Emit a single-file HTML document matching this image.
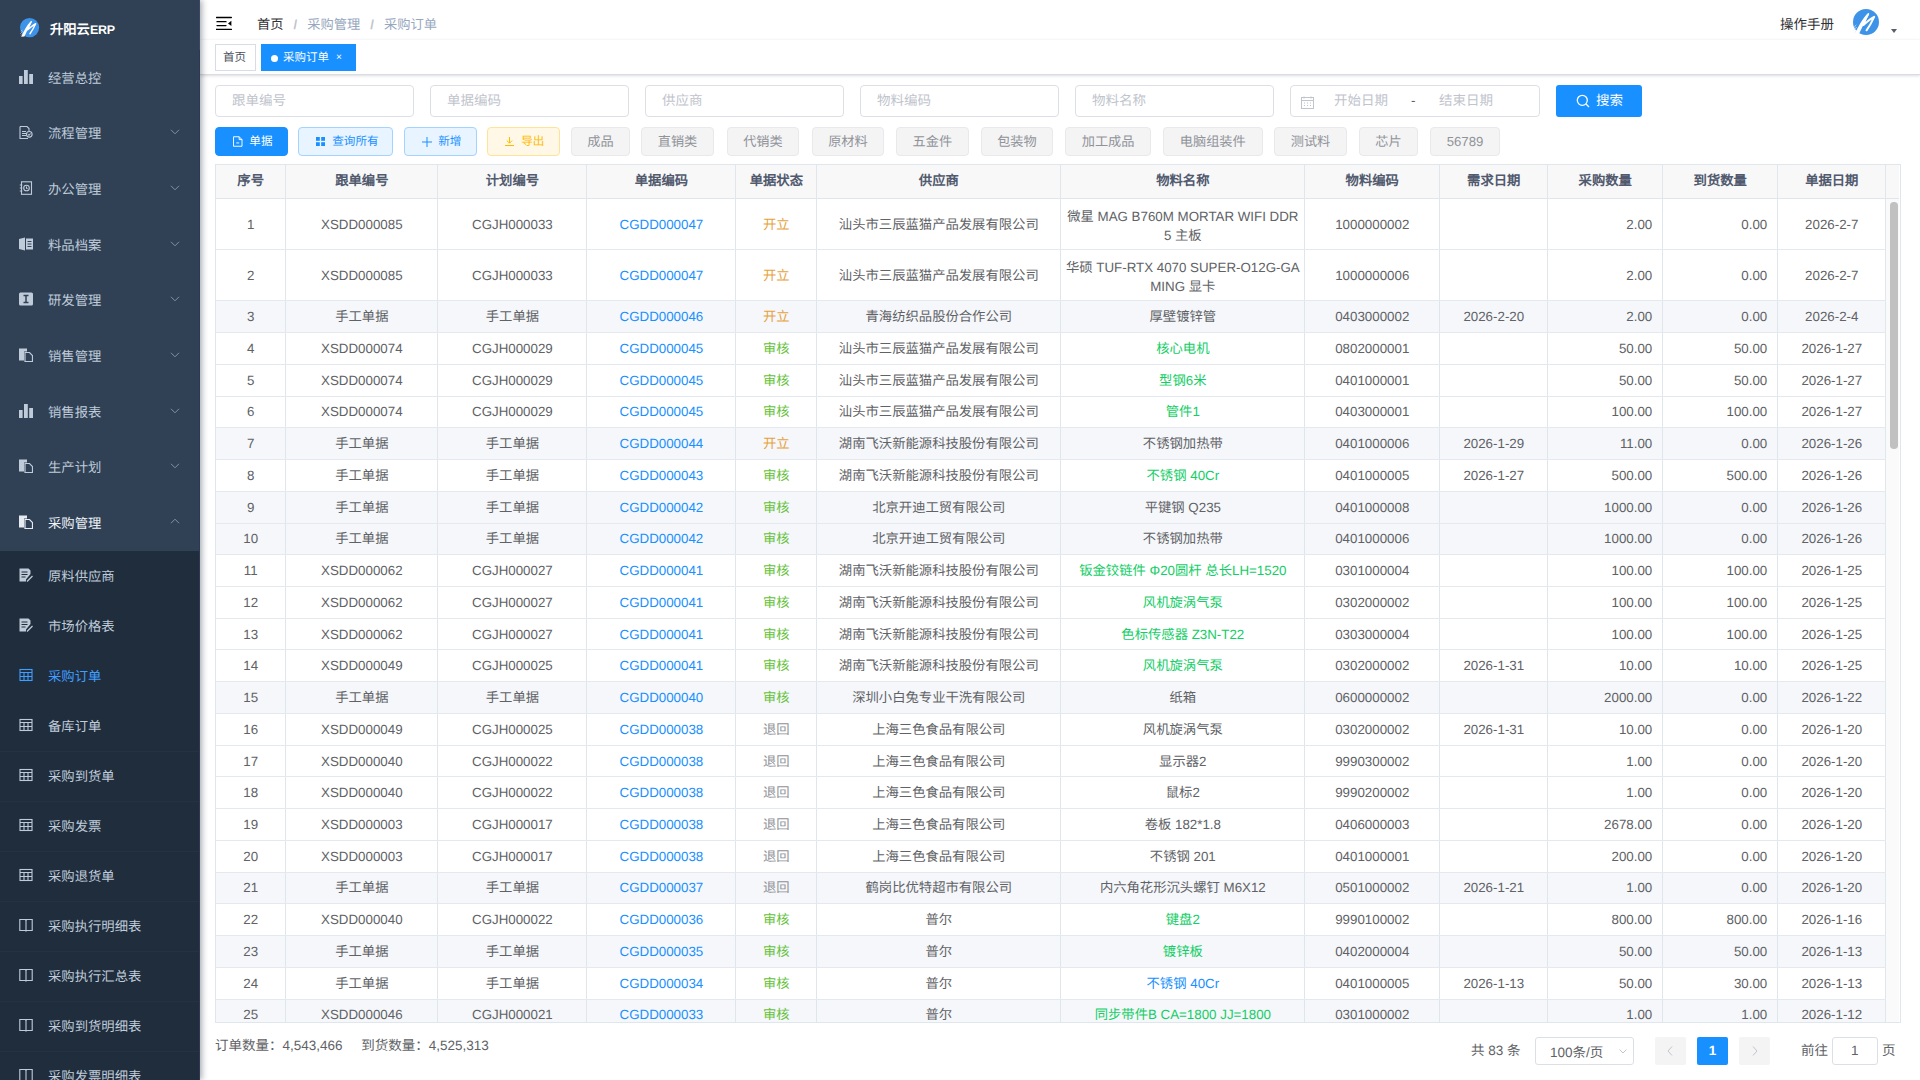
<!DOCTYPE html>
<html lang="zh-CN"><head><meta charset="utf-8"><title>采购订单</title>
<style>
*{box-sizing:border-box;margin:0;padding:0}
html,body{width:1920px;height:1080px;overflow:hidden;background:#fff;font-family:"Liberation Sans",sans-serif;color:#606266;text-rendering:geometricPrecision}
#side{position:absolute;left:0;top:0;width:200px;height:1080px;background:#304156;overflow:hidden;z-index:3;box-shadow:2px 0 6px rgba(0,21,41,.35)}
.logo{position:absolute;left:0;top:0;width:200px;height:50px}
.logo svg{position:absolute;left:19.7px;top:17.9px}
.logo .lt{position:absolute;left:50px;top:20px;font-size:13.3px;font-weight:bold;color:#fff;line-height:20px}
.menu{position:absolute;left:0;top:50px;width:200px}
.mi{position:relative;height:55.67px;color:#bfcbd9;font-size:13.33px}
.mi .ic,.si .ic{position:absolute;left:19px;top:50%;margin-top:-8px;width:14px;height:14px;line-height:0}
.mi .tx,.si .tx{position:absolute;left:48px;top:50%;margin-top:-9px;line-height:20px}
.mi.open .tx{color:#eef2f6}
.chev{position:absolute;left:170px;top:50%;margin-top:-4px}
.open .chev{margin-top:-5px}
.sub{background:#1f2d3d}
.si{position:relative;height:50px;color:#bfcbd9;font-size:13.33px}
.si.sep{border-top:1px solid #243244}
.si.act .tx{color:#409eff}
#main{position:absolute;left:200px;top:0;width:1720px;height:1080px;background:#fff}
.nav{position:absolute;left:0;top:0;width:1720px;height:40px;background:#fff;box-shadow:0 1px 4px rgba(0,21,41,.08)}
.ham{position:absolute;left:16px;top:16px}
.bc{position:absolute;left:57px;top:15px;font-size:13.25px;line-height:20px;color:#97a8be;white-space:nowrap}
.bc .h{color:#303133}
.bc .sl{color:#c0c4cc;margin:0 10px;font-weight:bold}
.man{position:absolute;left:1580px;top:15px;font-size:13.5px;line-height:20px;color:#303133}
.av{position:absolute;left:1653px;top:8.8px;line-height:0}
.caret{position:absolute;left:1691.3px;top:29px;width:0;height:0;border-left:3.5px solid transparent;border-right:3.5px solid transparent;border-top:4px solid #5a5e66}
.tags{position:absolute;left:0;top:40px;width:1720px;height:35px;background:#fff;border-bottom:1px solid #d8dce5;box-shadow:0 1px 3px 0 rgba(0,0,0,.12),0 0 3px 0 rgba(0,0,0,.04)}
.tag{position:absolute;top:4px;height:27px;border:1px solid #d8dce5;font-size:11.5px;line-height:26px;color:#495060;padding:0 8px}
.tag.t1{left:15px;width:41px;padding:0 2px 0 0;text-align:center}
.tag.t2{left:61px;width:95px;background:#1890ff;border-color:#1890ff;color:#fff;padding-left:21px}
.tag.t2:before{content:"";position:absolute;left:8.5px;top:9.5px;width:7.5px;height:7.5px;border-radius:50%;background:#fff}
.tag .x{position:absolute;left:74px;top:0;font-size:10px}
.inp{position:absolute;top:85px;width:199px;height:32px;border:1px solid #dcdfe6;border-radius:4px;background:#fff}
.ph{position:absolute;left:16px;top:5px;font-size:13.5px;line-height:20px;color:#c0c4cc;white-space:nowrap}
.btn{position:absolute;top:126.6px;height:29px;border-radius:4px;font-size:13.2px;line-height:27px;text-align:center;border:1px solid;white-space:nowrap}
.bt{position:absolute;top:0.8px;font-size:11.6px;line-height:27px}
.bg{background:#f4f4f5;border-color:#e9e9eb;color:#909399}
.search{position:absolute;left:1356px;top:85px;width:86px;height:32px;background:#1890ff;border-radius:3px;color:#fff;font-size:13.5px;line-height:32px}
.tbl{position:absolute;left:15px;top:164.2px;width:1686px;height:859px;border:1px solid #dfe6ec;overflow:hidden;background:#fff}
table{border-collapse:collapse;table-layout:fixed;position:absolute;left:-1px;}
th,td{border:1px solid #dfe6ec;text-align:center;font-size:13.33px;white-space:nowrap;overflow:hidden;padding:0}
th{height:33.7px;background:#f8f8f9;color:#515a6e;font-weight:bold;border-top:none;padding-bottom:2px;line-height:19px}
td{color:#606266;line-height:19px;border-top-color:#e4e9f0;border-bottom-color:#e4e9f0}
tr.gr td{background:#f5f7fa}
td.rt{text-align:right;padding-right:10px}
td.lk{color:#1890ff}
.st-k{color:#e6a23c!important}
.st-s{color:#67c23a!important}
.st-r{color:#909399!important}
.nm-g{color:#13ce66!important}
.nm-b{color:#1890ff!important}
td.dbl{padding-top:2.6px;white-space:normal}
.gut{position:absolute;left:1670.3px;top:0;width:13px;height:859px;background:#fafafa}
.guth{position:absolute;left:1670.3px;top:0;width:13px;height:33.7px;background:#f8f8f9;border-bottom:1px solid #dfe6ec}
.thumb{position:absolute;left:1674.3px;top:37.3px;width:7.5px;height:246.5px;border-radius:3.75px;background:#c1c1c1}
.foot{position:absolute;left:15px;top:1036px;font-size:13.5px;line-height:20px;color:#606266;white-space:nowrap}
.pg{position:absolute;top:1037px;height:28px;font-size:13.5px;line-height:28px;color:#606266}
</style></head><body>
<div id="side">
<div class="logo"><svg width="19.2" height="19.2" viewBox="0 0 20 20" overflow="visible"><circle cx="10" cy="10" r="10" fill="#3d93e8"/><path d="M1.2 19.6C3.5 14.5 7.5 7 11 3.6c1-.9 1.9-.5 1.2.8C10 8 7 14 4.6 19.4z" fill="#fff"/><path d="M11.2 4.8C9.8 7.5 8.3 10.5 8 12.3c2.2-2 5-4.6 8.3-6.3-1.6 3.5-3.7 7.3-5.9 10.4" fill="none" stroke="#fff" stroke-width="1.5" stroke-linecap="round" stroke-linejoin="round"/><path d="M.3 16.5l2.5-2.6M1.2 18.2l2.2-2.4M.9 13.9l1.6-1.6" stroke="#dbeafc" stroke-width=".6"/></svg><span class="lt">升阳云<span style="font-size:12.5px;letter-spacing:-0.2px">ERP</span></span></div>
<div class="menu">
<div class="mi"><span class="ic"><svg width="14" height="14" viewBox="0 0 14 14"><rect x="0" y="6" width="3.6" height="8" fill="#c0cbd9"/><rect x="5" y="0" width="3.8" height="14" fill="#c0cbd9"/><rect x="10.2" y="4" width="3.8" height="10" fill="#c0cbd9"/></svg></span><span class="tx">经营总控</span></div>
<div class="mi"><span class="ic"><svg width="14" height="14" viewBox="0 0 14 14" fill="none" stroke="#c0cbd9" stroke-width="1.1"><path d="M1 1.5h7l2 2v2.5M1 1.5v12h8"/><path d="M3 6.5h4M3 8.5h4M3 10.5h4"/><circle cx="10.3" cy="9.3" r="2.8"/><path d="M9 9.3l1 1 1.6-1.8"/></svg></span><span class="tx">流程管理</span><svg class="chev" width="10" height="6" viewBox="0 0 10 6" fill="none" stroke="#8592a3" stroke-width="1"><path d="M1 .8l4 4 4-4"/></svg></div>
<div class="mi"><span class="ic"><svg width="14" height="14" viewBox="0 0 14 14" fill="none" stroke="#c0cbd9" stroke-width="1.1"><rect x="2.5" y="0.8" width="10" height="12.5"/><circle cx="7.5" cy="7" r="2.8"/><path d="M7.5 5.6v1.5l1 .6M0.8 4h2.5M0.8 7h2.5M0.8 10h2.5"/></svg></span><span class="tx">办公管理</span><svg class="chev" width="10" height="6" viewBox="0 0 10 6" fill="none" stroke="#8592a3" stroke-width="1"><path d="M1 .8l4 4 4-4"/></svg></div>
<div class="mi"><span class="ic"><svg width="14" height="14" viewBox="0 0 14 14"><path d="M0 2l6-1.5v13L0 12z" fill="#c0cbd9"/><rect x="7" y="1.5" width="7" height="11" fill="#c0cbd9"/><path d="M8.5 4.5h4M8.5 7h4M8.5 9.5h4" stroke="#304156" stroke-width="1"/></svg></span><span class="tx">料品档案</span><svg class="chev" width="10" height="6" viewBox="0 0 10 6" fill="none" stroke="#8592a3" stroke-width="1"><path d="M1 .8l4 4 4-4"/></svg></div>
<div class="mi"><span class="ic"><svg width="14" height="14" viewBox="0 0 14 14"><rect x="0" y="0.5" width="14" height="13" rx="1.5" fill="#c0cbd9"/><path d="M4.5 3.5h5M7 3.5v7M4.5 10.5h5" stroke="#304156" stroke-width="1.5"/></svg></span><span class="tx">研发管理</span><svg class="chev" width="10" height="6" viewBox="0 0 10 6" fill="none" stroke="#8592a3" stroke-width="1"><path d="M1 .8l4 4 4-4"/></svg></div>
<div class="mi"><span class="ic"><svg width="14" height="14" viewBox="0 0 14 14"><path d="M0 0.5h8v3H5v9H0z" fill="#c0cbd9"/><path d="M6 4.5h4.5l3 3v6H6z" fill="none" stroke="#c0cbd9" stroke-width="1.2"/></svg></span><span class="tx">销售管理</span><svg class="chev" width="10" height="6" viewBox="0 0 10 6" fill="none" stroke="#8592a3" stroke-width="1"><path d="M1 .8l4 4 4-4"/></svg></div>
<div class="mi"><span class="ic"><svg width="14" height="14" viewBox="0 0 14 14"><rect x="0" y="6" width="3.6" height="8" fill="#c0cbd9"/><rect x="5" y="0" width="3.8" height="14" fill="#c0cbd9"/><rect x="10.2" y="4" width="3.8" height="10" fill="#c0cbd9"/></svg></span><span class="tx">销售报表</span><svg class="chev" width="10" height="6" viewBox="0 0 10 6" fill="none" stroke="#8592a3" stroke-width="1"><path d="M1 .8l4 4 4-4"/></svg></div>
<div class="mi"><span class="ic"><svg width="14" height="14" viewBox="0 0 14 14"><path d="M0 0.5h8v3H5v9H0z" fill="#c0cbd9"/><path d="M6 4.5h4.5l3 3v6H6z" fill="none" stroke="#c0cbd9" stroke-width="1.2"/></svg></span><span class="tx">生产计划</span><svg class="chev" width="10" height="6" viewBox="0 0 10 6" fill="none" stroke="#8592a3" stroke-width="1"><path d="M1 .8l4 4 4-4"/></svg></div>
<div class="mi open"><span class="ic"><svg width="14" height="14" viewBox="0 0 14 14"><path d="M0 0.5h8v3H5v9H0z" fill="#e6ebf1"/><path d="M6 4.5h4.5l3 3v6H6z" fill="none" stroke="#e6ebf1" stroke-width="1.2"/></svg></span><span class="tx">采购管理</span><svg class="chev" width="10" height="6" viewBox="0 0 10 6" fill="none" stroke="#8592a3" stroke-width="1"><path d="M1 5.2l4-4 4 4"/></svg></div>
<div class="sub">
<div class="si"><span class="ic"><svg width="14" height="14" viewBox="0 0 14 14"><path d="M0.5 0.5h9l2 2v3.5L7 11.5v2H0.5z" fill="#c0cbd9"/><path d="M2.5 4h6M2.5 6.5h6M2.5 9h4" stroke="#1f2d3d" stroke-width="1.1"/><path d="M8 13.5l5.5-5.5" stroke="#c0cbd9" stroke-width="1.3"/></svg></span><span class="tx">原料供应商</span></div>
<div class="si"><span class="ic"><svg width="14" height="14" viewBox="0 0 14 14"><path d="M0.5 0.5h9l2 2v3.5L7 11.5v2H0.5z" fill="#c0cbd9"/><path d="M2.5 4h6M2.5 6.5h6M2.5 9h4" stroke="#1f2d3d" stroke-width="1.1"/><path d="M8 13.5l5.5-5.5" stroke="#c0cbd9" stroke-width="1.3"/></svg></span><span class="tx">市场价格表</span></div>
<div class="si act"><span class="ic"><svg width="14" height="14" viewBox="0 0 14 14" fill="none" stroke="#409eff" stroke-width="1.1"><rect x="1" y="1.5" width="12" height="11"/><path d="M1 4.5h12M1 8.5h12M5 4.5v8M9 4.5v8"/></svg></span><span class="tx">采购订单</span></div>
<div class="si"><span class="ic"><svg width="14" height="14" viewBox="0 0 14 14" fill="none" stroke="#c0cbd9" stroke-width="1.1"><rect x="1" y="1.5" width="12" height="11"/><path d="M1 4.5h12M1 8.5h12M5 4.5v8M9 4.5v8"/></svg></span><span class="tx">备库订单</span></div>
<div class="si sep"><span class="ic"><svg width="14" height="14" viewBox="0 0 14 14" fill="none" stroke="#c0cbd9" stroke-width="1.1"><rect x="1" y="1.5" width="12" height="11"/><path d="M1 4.5h12M1 8.5h12M5 4.5v8M9 4.5v8"/></svg></span><span class="tx">采购到货单</span></div>
<div class="si sep"><span class="ic"><svg width="14" height="14" viewBox="0 0 14 14" fill="none" stroke="#c0cbd9" stroke-width="1.1"><rect x="1" y="1.5" width="12" height="11"/><path d="M1 4.5h12M1 8.5h12M5 4.5v8M9 4.5v8"/></svg></span><span class="tx">采购发票</span></div>
<div class="si sep"><span class="ic"><svg width="14" height="14" viewBox="0 0 14 14" fill="none" stroke="#c0cbd9" stroke-width="1.1"><rect x="1" y="1.5" width="12" height="11"/><path d="M1 4.5h12M1 8.5h12M5 4.5v8M9 4.5v8"/></svg></span><span class="tx">采购退货单</span></div>
<div class="si sep"><span class="ic"><svg width="14" height="14" viewBox="0 0 14 14" fill="none" stroke="#c0cbd9" stroke-width="1.1"><path d="M0.8 1.5h5.7l.5.6.5-.6h5.7v11H7.5l-.5.6-.5-.6H0.8z"/><path d="M7 2v11"/></svg></span><span class="tx">采购执行明细表</span></div>
<div class="si sep"><span class="ic"><svg width="14" height="14" viewBox="0 0 14 14" fill="none" stroke="#c0cbd9" stroke-width="1.1"><path d="M0.8 1.5h5.7l.5.6.5-.6h5.7v11H7.5l-.5.6-.5-.6H0.8z"/><path d="M7 2v11"/></svg></span><span class="tx">采购执行汇总表</span></div>
<div class="si sep"><span class="ic"><svg width="14" height="14" viewBox="0 0 14 14" fill="none" stroke="#c0cbd9" stroke-width="1.1"><path d="M0.8 1.5h5.7l.5.6.5-.6h5.7v11H7.5l-.5.6-.5-.6H0.8z"/><path d="M7 2v11"/></svg></span><span class="tx">采购到货明细表</span></div>
<div class="si sep"><span class="ic"><svg width="14" height="14" viewBox="0 0 14 14" fill="none" stroke="#c0cbd9" stroke-width="1.1"><path d="M0.8 1.5h5.7l.5.6.5-.6h5.7v11H7.5l-.5.6-.5-.6H0.8z"/><path d="M7 2v11"/></svg></span><span class="tx">采购发票明细表</span></div>
</div>
</div>
<div style="position:absolute;left:199px;top:0;width:1px;height:50px;background:#3a495c"></div><div style="position:absolute;left:199px;top:50px;width:1px;height:1030px;background:#2b3a4e"></div>
</div>
<div id="main">
<div class="nav">
<svg class="ham" width="16" height="15" viewBox="0 0 16 15"><path d="M.4 1.5h15M1 5.7h9M1 9.6h9M.4 13.4h15" stroke="#000" stroke-width="1.3" stroke-linecap="round"/><path d="M15.4 4.8v5.2L12 7.5z" fill="#000"/></svg>
<div class="bc"><span class="h">首页</span><span class="sl">/</span>采购管理<span class="sl">/</span>采购订单</div>
<div class="man">操作手册</div>
<div class="av"><svg width="26" height="26" viewBox="0 0 20 20" overflow="visible"><circle cx="10" cy="10" r="10" fill="#3d93e8"/><path d="M1.2 19.6C3.5 14.5 7.5 7 11 3.6c1-.9 1.9-.5 1.2.8C10 8 7 14 4.6 19.4z" fill="#fff"/><path d="M11.2 4.8C9.8 7.5 8.3 10.5 8 12.3c2.2-2 5-4.6 8.3-6.3-1.6 3.5-3.7 7.3-5.9 10.4" fill="none" stroke="#fff" stroke-width="1.5" stroke-linecap="round" stroke-linejoin="round"/><path d="M.3 16.5l2.5-2.6M1.2 18.2l2.2-2.4M.9 13.9l1.6-1.6" stroke="#dbeafc" stroke-width=".6"/></svg></div>
<div class="caret"></div>
</div>
<div class="tags"><div class="tag t1">首页</div><div class="tag t2">采购订单<span class="x">×</span></div></div>
<div class="inp" style="left:15px"><span class="ph">跟单编号</span></div><div class="inp" style="left:230px"><span class="ph">单据编码</span></div><div class="inp" style="left:445px"><span class="ph">供应商</span></div><div class="inp" style="left:660px"><span class="ph">物料编码</span></div><div class="inp" style="left:875px"><span class="ph">物料名称</span></div>
<div class="inp" style="left:1090px;width:250px"><svg style="position:absolute;left:10px;top:10px" width="13" height="13" viewBox="0 0 13 13" fill="none" stroke="#c0c4cc" stroke-width="1"><rect x=".5" y="1.5" width="12" height="11"/><path d="M.5 4.5h12M3 .5v2M10 .5v2M3 7h1M6 7h1M9 7h1M3 9.5h1M6 9.5h1M9 9.5h1"/></svg><span class="ph" style="left:43px">开始日期</span><span class="ph" style="left:120px;color:#606266">-</span><span class="ph" style="left:148px">结束日期</span></div>
<div class="search"><svg style="position:absolute;left:20px;top:9px" width="14" height="14" viewBox="0 0 14 14" fill="none" stroke="#fff" stroke-width="1.3"><circle cx="6.3" cy="6.3" r="5"/><path d="M10 10l3 3"/></svg><span style="position:absolute;left:40px;top:0">搜索</span></div>
<div class="btn" style="left:15px;width:72.6px;background:#1890ff;border-color:#1890ff;color:#fff"><svg style="position:absolute;left:17.3px;top:8.6px" width="9.5" height="11" viewBox="0 0 10 11" fill="none" stroke="#fff" stroke-width="1"><path d="M.5 .5h6l3 3v7H.5z"/><path d="M6.5 .5v3h3"/><path d="M3.5 7h3"/></svg><span class="bt" style="left:33.3px">单据</span></div>
<div class="btn" style="left:98.2px;width:95.3px;background:#e8f4ff;border-color:#a3d3ff;color:#1890ff"><svg style="position:absolute;left:16.5px;top:9.6px" width="9" height="9" viewBox="0 0 9 9" fill="#1890ff"><rect x="0" y="0" width="3.8" height="3.8"/><rect x="5.2" y="0" width="3.8" height="3.8"/><rect x="0" y="5.2" width="3.8" height="3.8"/><rect x="5.2" y="5.2" width="3.8" height="3.8"/></svg><span class="bt" style="left:33px">查询所有</span></div>
<div class="btn" style="left:204.2px;width:72.7px;background:#e8f4ff;border-color:#a3d3ff;color:#1890ff"><svg style="position:absolute;left:16.5px;top:9.5px" width="10" height="10" viewBox="0 0 10 10" stroke="#1890ff" stroke-width="1"><path d="M5 0v10M0 5h10"/></svg><span class="bt" style="left:33px">新增</span></div>
<div class="btn" style="left:287.2px;width:72.6px;background:#fff8e6;border-color:#ffe399;color:#ffba00"><svg style="position:absolute;left:17px;top:9.5px" width="9" height="9" viewBox="0 0 9 9" fill="none" stroke="#ffba00" stroke-width="1"><path d="M4.5 0v6M1.8 3.5l2.7 2.7 2.7-2.7M0 8.5h9"/></svg><span class="bt" style="left:33px">导出</span></div>
<div class="btn bg" style="left:371px;width:59px">成品</div><div class="btn bg" style="left:441px;width:73px">直销类</div><div class="btn bg" style="left:526.5px;width:72.89999999999998px">代销类</div><div class="btn bg" style="left:611.5px;width:72.89999999999998px">原材料</div><div class="btn bg" style="left:696px;width:72.75px">五金件</div><div class="btn bg" style="left:780.6px;width:72.69999999999993px">包装物</div><div class="btn bg" style="left:865px;width:86.25px">加工成品</div><div class="btn bg" style="left:963px;width:99.5px">电脑组装件</div><div class="btn bg" style="left:1074px;width:73px">测试料</div><div class="btn bg" style="left:1159px;width:59px">芯片</div><div class="btn bg" style="left:1230px;width:70px">56789</div>
<div class="tbl">
<table style="width:1671.3px"><colgroup><col style="width:70.3px"><col style="width:152.1px"><col style="width:149.0px"><col style="width:149.0px"><col style="width:80.85px"><col style="width:244.15px"><col style="width:243.9px"><col style="width:135.0px"><col style="width:108.0px"><col style="width:115.0px"><col style="width:115.0px"><col style="width:108.0px"></colgroup>
<thead><tr><th>序号</th><th>跟单编号</th><th>计划编号</th><th>单据编码</th><th>单据状态</th><th>供应商</th><th>物料名称</th><th>物料编码</th><th>需求日期</th><th>采购数量</th><th>到货数量</th><th>单据日期</th></tr></thead>
<tbody>
<tr style="height:51px"><td>1</td><td>XSDD000085</td><td>CGJH000033</td><td class="lk">CGDD000047</td><td class="st-k">开立</td><td>汕头市三辰蓝猫产品发展有限公司</td><td class="nm-n dbl">微星 MAG B760M MORTAR WIFI DDR<br>5 主板</td><td>1000000002</td><td></td><td class="rt">2.00</td><td class="rt">0.00</td><td>2026-2-7</td></tr>
<tr style="height:51px"><td>2</td><td>XSDD000085</td><td>CGJH000033</td><td class="lk">CGDD000047</td><td class="st-k">开立</td><td>汕头市三辰蓝猫产品发展有限公司</td><td class="nm-n dbl">华硕 TUF-RTX 4070 SUPER-O12G-GA<br>MING 显卡</td><td>1000000006</td><td></td><td class="rt">2.00</td><td class="rt">0.00</td><td>2026-2-7</td></tr>
<tr class="gr" style="height:31.74px"><td>3</td><td>手工单据</td><td>手工单据</td><td class="lk">CGDD000046</td><td class="st-k">开立</td><td>青海纺织品股份合作公司</td><td class="nm-n">厚壁镀锌管</td><td>0403000002</td><td>2026-2-20</td><td class="rt">2.00</td><td class="rt">0.00</td><td>2026-2-4</td></tr>
<tr style="height:31.74px"><td>4</td><td>XSDD000074</td><td>CGJH000029</td><td class="lk">CGDD000045</td><td class="st-s">审核</td><td>汕头市三辰蓝猫产品发展有限公司</td><td class="nm-g">核心电机</td><td>0802000001</td><td></td><td class="rt">50.00</td><td class="rt">50.00</td><td>2026-1-27</td></tr>
<tr style="height:31.74px"><td>5</td><td>XSDD000074</td><td>CGJH000029</td><td class="lk">CGDD000045</td><td class="st-s">审核</td><td>汕头市三辰蓝猫产品发展有限公司</td><td class="nm-g">型钢6米</td><td>0401000001</td><td></td><td class="rt">50.00</td><td class="rt">50.00</td><td>2026-1-27</td></tr>
<tr style="height:31.74px"><td>6</td><td>XSDD000074</td><td>CGJH000029</td><td class="lk">CGDD000045</td><td class="st-s">审核</td><td>汕头市三辰蓝猫产品发展有限公司</td><td class="nm-g">管件1</td><td>0403000001</td><td></td><td class="rt">100.00</td><td class="rt">100.00</td><td>2026-1-27</td></tr>
<tr class="gr" style="height:31.74px"><td>7</td><td>手工单据</td><td>手工单据</td><td class="lk">CGDD000044</td><td class="st-k">开立</td><td>湖南飞沃新能源科技股份有限公司</td><td class="nm-n">不锈钢加热带</td><td>0401000006</td><td>2026-1-29</td><td class="rt">11.00</td><td class="rt">0.00</td><td>2026-1-26</td></tr>
<tr style="height:31.74px"><td>8</td><td>手工单据</td><td>手工单据</td><td class="lk">CGDD000043</td><td class="st-s">审核</td><td>湖南飞沃新能源科技股份有限公司</td><td class="nm-g">不锈钢 40Cr</td><td>0401000005</td><td>2026-1-27</td><td class="rt">500.00</td><td class="rt">500.00</td><td>2026-1-26</td></tr>
<tr class="gr" style="height:31.74px"><td>9</td><td>手工单据</td><td>手工单据</td><td class="lk">CGDD000042</td><td class="st-s">审核</td><td>北京开迪工贸有限公司</td><td class="nm-n">平键钢 Q235</td><td>0401000008</td><td></td><td class="rt">1000.00</td><td class="rt">0.00</td><td>2026-1-26</td></tr>
<tr class="gr" style="height:31.74px"><td>10</td><td>手工单据</td><td>手工单据</td><td class="lk">CGDD000042</td><td class="st-s">审核</td><td>北京开迪工贸有限公司</td><td class="nm-n">不锈钢加热带</td><td>0401000006</td><td></td><td class="rt">1000.00</td><td class="rt">0.00</td><td>2026-1-26</td></tr>
<tr style="height:31.74px"><td>11</td><td>XSDD000062</td><td>CGJH000027</td><td class="lk">CGDD000041</td><td class="st-s">审核</td><td>湖南飞沃新能源科技股份有限公司</td><td class="nm-g">钣金铰链件 Φ20圆杆 总长LH=1520</td><td>0301000004</td><td></td><td class="rt">100.00</td><td class="rt">100.00</td><td>2026-1-25</td></tr>
<tr style="height:31.74px"><td>12</td><td>XSDD000062</td><td>CGJH000027</td><td class="lk">CGDD000041</td><td class="st-s">审核</td><td>湖南飞沃新能源科技股份有限公司</td><td class="nm-g">风机旋涡气泵</td><td>0302000002</td><td></td><td class="rt">100.00</td><td class="rt">100.00</td><td>2026-1-25</td></tr>
<tr style="height:31.74px"><td>13</td><td>XSDD000062</td><td>CGJH000027</td><td class="lk">CGDD000041</td><td class="st-s">审核</td><td>湖南飞沃新能源科技股份有限公司</td><td class="nm-g">色标传感器 Z3N-T22</td><td>0303000004</td><td></td><td class="rt">100.00</td><td class="rt">100.00</td><td>2026-1-25</td></tr>
<tr style="height:31.74px"><td>14</td><td>XSDD000049</td><td>CGJH000025</td><td class="lk">CGDD000041</td><td class="st-s">审核</td><td>湖南飞沃新能源科技股份有限公司</td><td class="nm-g">风机旋涡气泵</td><td>0302000002</td><td>2026-1-31</td><td class="rt">10.00</td><td class="rt">10.00</td><td>2026-1-25</td></tr>
<tr class="gr" style="height:31.74px"><td>15</td><td>手工单据</td><td>手工单据</td><td class="lk">CGDD000040</td><td class="st-s">审核</td><td>深圳小白兔专业干洗有限公司</td><td class="nm-n">纸箱</td><td>0600000002</td><td></td><td class="rt">2000.00</td><td class="rt">0.00</td><td>2026-1-22</td></tr>
<tr style="height:31.74px"><td>16</td><td>XSDD000049</td><td>CGJH000025</td><td class="lk">CGDD000038</td><td class="st-r">退回</td><td>上海三色食品有限公司</td><td class="nm-n">风机旋涡气泵</td><td>0302000002</td><td>2026-1-31</td><td class="rt">10.00</td><td class="rt">0.00</td><td>2026-1-20</td></tr>
<tr style="height:31.74px"><td>17</td><td>XSDD000040</td><td>CGJH000022</td><td class="lk">CGDD000038</td><td class="st-r">退回</td><td>上海三色食品有限公司</td><td class="nm-n">显示器2</td><td>9990300002</td><td></td><td class="rt">1.00</td><td class="rt">0.00</td><td>2026-1-20</td></tr>
<tr style="height:31.74px"><td>18</td><td>XSDD000040</td><td>CGJH000022</td><td class="lk">CGDD000038</td><td class="st-r">退回</td><td>上海三色食品有限公司</td><td class="nm-n">鼠标2</td><td>9990200002</td><td></td><td class="rt">1.00</td><td class="rt">0.00</td><td>2026-1-20</td></tr>
<tr style="height:31.74px"><td>19</td><td>XSDD000003</td><td>CGJH000017</td><td class="lk">CGDD000038</td><td class="st-r">退回</td><td>上海三色食品有限公司</td><td class="nm-n">卷板 182*1.8</td><td>0406000003</td><td></td><td class="rt">2678.00</td><td class="rt">0.00</td><td>2026-1-20</td></tr>
<tr style="height:31.74px"><td>20</td><td>XSDD000003</td><td>CGJH000017</td><td class="lk">CGDD000038</td><td class="st-r">退回</td><td>上海三色食品有限公司</td><td class="nm-n">不锈钢 201</td><td>0401000001</td><td></td><td class="rt">200.00</td><td class="rt">0.00</td><td>2026-1-20</td></tr>
<tr class="gr" style="height:31.74px"><td>21</td><td>手工单据</td><td>手工单据</td><td class="lk">CGDD000037</td><td class="st-r">退回</td><td>鹤岗比优特超市有限公司</td><td class="nm-n">内六角花形沉头螺钉 M6X12</td><td>0501000002</td><td>2026-1-21</td><td class="rt">1.00</td><td class="rt">0.00</td><td>2026-1-20</td></tr>
<tr style="height:31.74px"><td>22</td><td>XSDD000040</td><td>CGJH000022</td><td class="lk">CGDD000036</td><td class="st-s">审核</td><td>普尔</td><td class="nm-g">键盘2</td><td>9990100002</td><td></td><td class="rt">800.00</td><td class="rt">800.00</td><td>2026-1-16</td></tr>
<tr class="gr" style="height:31.74px"><td>23</td><td>手工单据</td><td>手工单据</td><td class="lk">CGDD000035</td><td class="st-s">审核</td><td>普尔</td><td class="nm-g">镀锌板</td><td>0402000004</td><td></td><td class="rt">50.00</td><td class="rt">50.00</td><td>2026-1-13</td></tr>
<tr style="height:31.74px"><td>24</td><td>手工单据</td><td>手工单据</td><td class="lk">CGDD000034</td><td class="st-s">审核</td><td>普尔</td><td class="nm-b">不锈钢 40Cr</td><td>0401000005</td><td>2026-1-13</td><td class="rt">50.00</td><td class="rt">30.00</td><td>2026-1-13</td></tr>
<tr class="gr" style="height:31.74px"><td>25</td><td>XSDD000046</td><td>CGJH000021</td><td class="lk">CGDD000033</td><td class="st-s">审核</td><td>普尔</td><td class="nm-g">同步带件B CA=1800 JJ=1800</td><td>0301000002</td><td></td><td class="rt">1.00</td><td class="rt">1.00</td><td>2026-1-12</td></tr>
</tbody></table>
<div class="gut"></div><div class="guth"></div>
<div class="thumb"></div>
</div>
<div class="foot">订单数量：4,543,466 &nbsp;&nbsp;&nbsp;&nbsp;到货数量：4,525,313</div>
<div class="pg" style="left:1271px">共 83 条</div>
<div class="pg" style="left:1334.6px;width:99px;border:1px solid #dcdfe6;border-radius:3px;line-height:26px"><span style="position:absolute;left:14.5px;top:1.5px">100条/页</span><svg style="position:absolute;left:83px;top:11px" width="8" height="5" viewBox="0 0 8 5" fill="none" stroke="#c0c4cc"><path d="M.5 .5l3.5 3.5 3.5-3.5"/></svg></div>
<div class="pg" style="left:1455px;width:30.7px;background:#f4f4f5;border-radius:2px"><svg style="position:absolute;left:12px;top:9px" width="6" height="10" viewBox="0 0 6 10" fill="none" stroke="#c0c4cc"><path d="M5 .5L1 5l4 4.5"/></svg></div>
<div class="pg" style="left:1497.4px;width:30.3px;background:#1890ff;border-radius:2px;color:#fff;text-align:center;font-weight:bold">1</div>
<div class="pg" style="left:1539.4px;width:30.9px;background:#f4f4f5;border-radius:2px"><svg style="position:absolute;left:13px;top:9px" width="6" height="10" viewBox="0 0 6 10" fill="none" stroke="#c0c4cc"><path d="M1 .5L5 5l-4 4.5"/></svg></div>
<div class="pg" style="left:1601px">前往</div>
<div class="pg" style="left:1632px;width:45.5px;border:1px solid #dcdfe6;border-radius:3px;text-align:center;line-height:26px">1</div>
<div class="pg" style="left:1682px">页</div>
</div>
</body></html>
